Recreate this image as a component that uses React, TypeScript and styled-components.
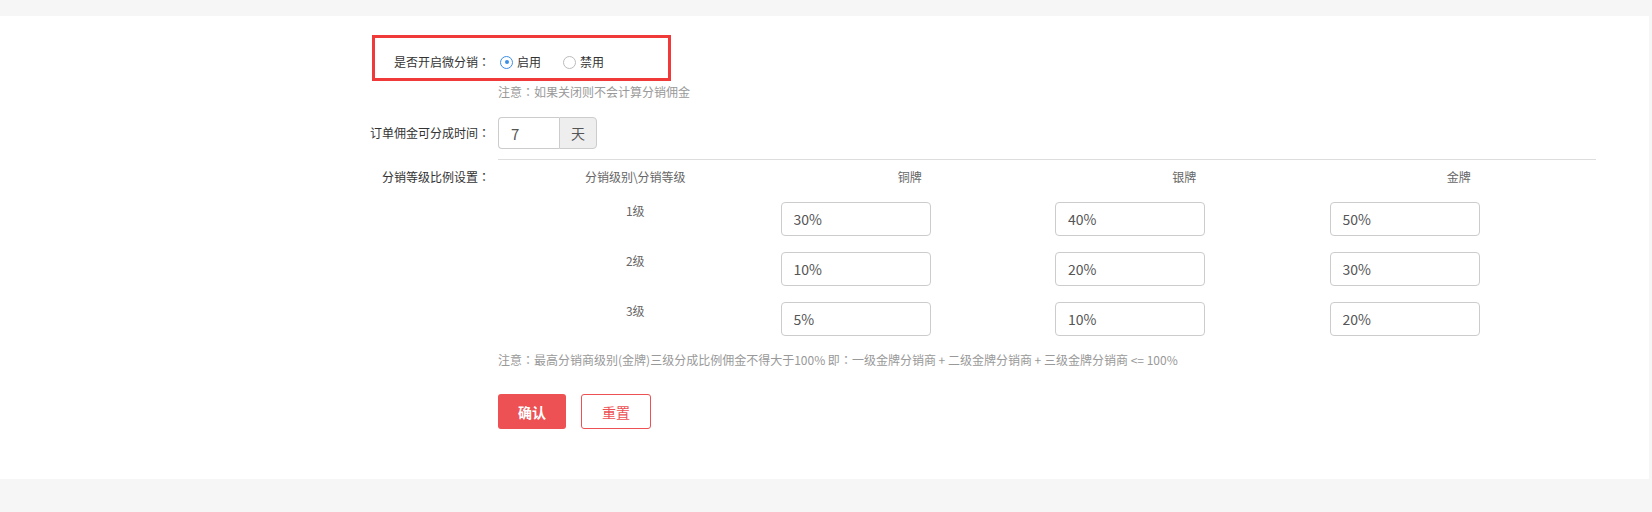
import React, {useState} from 'react';
import styled, {createGlobalStyle} from "styled-components";

const GlobalStyle = createGlobalStyle`
  html, body {
    margin: 0;
    padding: 0;
    background: #f6f6f6;
  }
  body {
    font-family: "Noto Sans CJK SC", "Noto Sans", sans-serif;
    font-size: 12px;
    color: #333333;
  }
`

const levels = [
    {name: "1级", values: ["30%", "40%", "50%"]},
    {name: "2级", values: ["10%", "20%", "30%"]},
    {name: "3级", values: ["5%", "10%", "20%"]},
]

const ranks = ["铜牌", "银牌", "金牌"]

export default function App() {
    const [enabled, setEnabled] = useState<boolean>(true)

    return (
        <>
            <GlobalStyle/>
            <Page>
                <Panel>
                    <FormRow>
                        <Highlight/>
                        <Label>是否开启微分销<Colon>：</Colon></Label>
                        <RadioGroup>
                            <RadioItem onClick={() => setEnabled(true)}>
                                <RadioCircle $checked={enabled}/>
                                <RadioText>启用</RadioText>
                            </RadioItem>
                            <RadioItem onClick={() => setEnabled(false)}>
                                <RadioCircle $checked={!enabled}/>
                                <RadioText>禁用</RadioText>
                            </RadioItem>
                        </RadioGroup>
                    </FormRow>
                    <NoteRow>
                        <span/>
                        <Note>注意<Colon>：</Colon>如果关闭则不会计算分销佣金</Note>
                    </NoteRow>
                    <FormRow $top={16}>
                        <Label>订单佣金可分成时间<Colon>：</Colon></Label>
                        <InputGroup>
                            <DaysInput defaultValue="7"/>
                            <Addon>天</Addon>
                        </InputGroup>
                    </FormRow>
                    <TableRow>
                        <TableLabel>分销等级比例设置<Colon>：</Colon></TableLabel>
                        <div>
                            <RateTable>
                                <HeadCell>分销级别\分销等级</HeadCell>
                                {ranks.map(rank => <HeadCell key={rank}>{rank}</HeadCell>)}
                                {levels.map(level => (
                                    <React.Fragment key={level.name}>
                                        <LevelCell>{level.name}</LevelCell>
                                        {level.values.map((value, i) => (
                                            <InputCell key={i}>
                                                <RateInput defaultValue={value}/>
                                            </InputCell>
                                        ))}
                                    </React.Fragment>
                                ))}
                            </RateTable>
                            <TableNote>
                                注意<Colon>：</Colon>最高分销商级别(金牌)三级分成比例佣金不得大于100% 即<Colon>：</Colon>一级金牌分销商 + 二级金牌分销商 + 三级金牌分销商 &lt;= 100%
                            </TableNote>
                            <Buttons>
                                <ConfirmBtn>确认</ConfirmBtn>
                                <ResetBtn>重置</ResetBtn>
                            </Buttons>
                        </div>
                    </TableRow>
                </Panel>
            </Page>
        </>
    );
}

const Page = styled.div`
  height: 512px;
  padding: 16px 3px 0 0;
  box-sizing: border-box;
`
const Panel = styled.div`
  height: 463px;
  background: #ffffff;
  padding: 30px 0 0 0;
  box-sizing: border-box;
`
const FormRow = styled.div<{$top?: number}>`
  position: relative;
  display: grid;
  grid-template-columns: 490px 1fr;
  column-gap: 8px;
  align-items: center;
  min-height: 32px;
  margin-top: ${p => p.$top || 0}px;
`
const Highlight = styled.div`
  position: absolute;
  left: 372px;
  top: -11px;
  width: 299px;
  height: 46px;
  border: 3px solid #f03a3a;
  box-sizing: border-box;
  pointer-events: none;
`
const Colon = styled.span`
  font-family: "Noto Sans CJK TC", "Noto Sans CJK SC", sans-serif;
`
const Label = styled.label`
  text-align: right;
  font-size: 12px;
  line-height: 18px;
  color: #333333;
`
const RadioGroup = styled.div`
  display: flex;
  align-items: center;
  gap: 22px;
  padding-left: 2px;
`
const RadioItem = styled.div`
  display: flex;
  align-items: center;
  gap: 4px;
  cursor: pointer;
`
const RadioCircle = styled.span<{$checked: boolean}>`
  position: relative;
  width: 13px;
  height: 13px;
  border-radius: 50%;
  border: 1px solid ${p => p.$checked ? "#3a8ee6" : "#bbbbbb"};
  box-sizing: border-box;
  background: #ffffff;
  &::after {
    content: "";
    display: ${p => p.$checked ? "block" : "none"};
    position: absolute;
    left: 3.5px;
    top: 3.5px;
    width: 4px;
    height: 4px;
    border-radius: 50%;
    background: #3a8ee6;
  }
`
const RadioText = styled.span`
  font-size: 12px;
  line-height: 18px;
  color: #333333;
`
const NoteRow = styled.div`
  display: grid;
  grid-template-columns: 490px 1fr;
  column-gap: 8px;
  margin-top: 5px;
`
const Note = styled.p`
  margin: 0;
  font-size: 12px;
  line-height: 18px;
  color: #999999;
`
const InputGroup = styled.div`
  display: flex;
  height: 32px;
  width: 99px;
`
const DaysInput = styled.input`
  width: 61px;
  height: 32px;
  box-sizing: border-box;
  border: 1px solid #cccccc;
  border-right: none;
  border-radius: 4px 0 0 4px;
  padding: 0 12px;
  font-family: "Noto Sans CJK SC", "Noto Sans", sans-serif;
  font-size: 15px;
  color: #555555;
  outline: none;
`
const Addon = styled.span`
  width: 38px;
  height: 32px;
  box-sizing: border-box;
  border: 1px solid #cccccc;
  border-radius: 0 4px 4px 0;
  background: #eeeeee;
  display: flex;
  align-items: center;
  justify-content: center;
  font-size: 14px;
  color: #555555;
`
const TableRow = styled.div`
  display: grid;
  grid-template-columns: 490px 1098px;
  column-gap: 8px;
  margin-top: 11px;
`
const TableLabel = styled(Label)`
  padding-top: 8px;
`
const RateTable = styled.div`
  display: grid;
  grid-template-columns: repeat(4, 1fr);
  border-top: 1px solid #dddddd;
  margin-top: -1px;
`
const HeadCell = styled.div`
  padding: 8px;
  text-align: center;
  font-size: 12px;
  line-height: 18px;
  color: #666666;
`
const LevelCell = styled(HeadCell)`
  height: 50px;
  box-sizing: border-box;
`
const InputCell = styled.div`
  height: 50px;
  padding: 8px;
  box-sizing: border-box;
`
const RateInput = styled.input`
  display: block;
  width: 150px;
  height: 34px;
  box-sizing: border-box;
  border: 1px solid #cccccc;
  border-radius: 4px;
  padding: 0 12px;
  font-family: "Noto Sans CJK SC", "Noto Sans", sans-serif;
  font-size: 14px;
  color: #555555;
  outline: none;
`
const TableNote = styled.p`
  margin: 7px 0 0;
  font-size: 12px;
  line-height: 18px;
  color: #999999;
`
const Buttons = styled.div`
  display: flex;
  gap: 15px;
  margin-top: 25px;
`
const ConfirmBtn = styled.button`
  width: 68px;
  height: 35px;
  border: none;
  border-radius: 3px;
  background: #ed5153;
  color: #ffffff;
  font-family: "Noto Sans CJK SC", "Noto Sans", sans-serif;
  font-size: 14px;
  font-weight: 700;
  cursor: pointer;
`
const ResetBtn = styled.button`
  width: 70px;
  height: 35px;
  border: 1px solid #ed5153;
  border-radius: 3px;
  background: #ffffff;
  color: #ed5153;
  font-family: "Noto Sans CJK SC", "Noto Sans", sans-serif;
  font-size: 14px;
  cursor: pointer;
`
